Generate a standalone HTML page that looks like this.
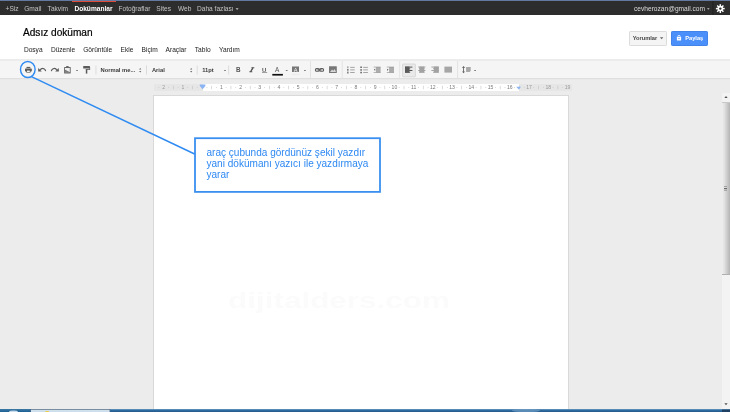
<!DOCTYPE html>
<html><head><meta charset="utf-8">
<style>
html,body{margin:0;padding:0;}
html{width:730px;height:412px;overflow:hidden;}
body{width:730px;height:412px;overflow:hidden;position:relative;background:#ececec;font-family:"Liberation Sans",sans-serif;}
.abs{position:absolute;}
#topline{left:-10px;top:-10px;width:750px;height:11px;background:#65789f;}
#gbar{left:-10px;top:1px;width:750px;height:14.3px;background:#2d2d2d;}
#gbar span{position:absolute;top:3.5px;font-size:6.6px;line-height:8px;color:#c4c4c4;white-space:nowrap;}
#red{left:72px;top:1px;width:44px;height:1px;background:#dd4b39;}
#hdr{left:-10px;top:15.3px;width:750px;height:44.7px;background:#fff;}
#title{left:23px;top:26px;font-size:10.1px;line-height:13px;color:#000;-webkit-text-stroke:0.2px #000;white-space:nowrap;}
.menu{top:45.5px;font-size:6.6px;line-height:8px;color:#222;white-space:nowrap;}
#tb{left:-10px;top:60px;width:750px;height:18.4px;background:#f5f5f5;box-shadow:0 0.6px 1.2px rgba(0,0,0,0.07);box-sizing:border-box;}
.tbt{top:66.8px;font-size:5.8px;line-height:7px;color:#3a3a3a;font-weight:bold;white-space:nowrap;}
#page{left:153.2px;top:95.3px;width:415.6px;height:330px;background:#fff;border:1px solid #d9d9d9;box-sizing:border-box;}
#ruler{left:153.8px;top:83.8px;width:418px;height:7.3px;background:#e6e6e6;}
#rulerw{left:202.5px;top:83.8px;width:316.5px;height:7.3px;background:#fff;}
#callout{left:195px;top:138.2px;width:185px;height:53.7px;background:#fff;}
#ctext{left:206px;top:147px;font-size:10.05px;line-height:11.1px;color:#2d88f2;white-space:nowrap;transform:translate(0.5px,0.35px);}
#wm{left:228px;top:288px;font-size:22px;line-height:26px;font-weight:bold;color:#fbfbfb;white-space:nowrap;transform-origin:0 0;transform:scaleX(1.43);}
#btn1{left:629px;top:31px;width:38px;height:14.6px;background:#f4f4f4;border:1px solid #dcdcdc;border-radius:1.2px;box-sizing:border-box;}
#btn2{left:671px;top:31px;width:37px;height:14.6px;background:#4b8ffb;border:1px solid #4283ea;border-radius:1.2px;box-sizing:border-box;}
.bt{top:34.6px;font-size:5.7px;line-height:7px;font-weight:bold;white-space:nowrap;}
#sbtrack{left:722px;top:92.5px;width:18px;height:316.5px;background:#f3f3f3;}
#sbthumb{left:722.3px;top:102px;width:17.7px;height:172.5px;background:linear-gradient(90deg,#efefef 0px,#dedede 2.7px,#b6b6b6 7.7px);border-top:1px solid #c8c8c8;border-bottom:1px solid #b0b0b0;box-sizing:border-box;}
#taskbar{left:-10px;top:409px;width:750px;height:13px;background:linear-gradient(180deg,#6f9cc0 0px,#2c6aa0 1.4px,#23598d 3px);}
#tk1{left:-10px;top:409px;width:41px;height:13px;background:linear-gradient(180deg,#3b7aa6 0px,#1d5f92 3px);}
#tk2{left:31px;top:409px;width:79px;height:13px;background:linear-gradient(180deg,#9ab3c6 0px,#d4e3ee 1.2px,#c9dcea 3px);}
#clip{position:absolute;left:0;top:0;width:730px;height:412px;overflow:hidden;}
#w{position:absolute;left:-10px;top:-10px;width:750px;height:432px;filter:blur(0.35px);background:#ececec;}
#c{position:absolute;left:10px;top:10px;width:730px;height:412px;}
</style></head><body><div id="clip"><div id="w"><div id="c">
<div class="abs" id="topline"></div>
<div class="abs" id="gbar"><div class="abs" style="left:10px;top:0">
<span style="left:5.6px">+Siz</span><span style="left:24.2px">Gmail</span><span style="left:47.6px">Takvim</span><span style="left:74.4px;color:#fff;font-weight:bold">Dokümanlar</span><span style="left:118.5px">Fotoğraflar</span><span style="left:156.3px">Sites</span><span style="left:178px">Web</span><span style="left:197px">Daha fazlası</span>
<span style="left:634px;color:#dcdcdc;font-size:6.62px">cevherozan@gmail.com</span>
</div></div>
<div class="abs" id="red"></div>
<div class="abs" id="hdr"></div>
<div class="abs" id="title">Adsız doküman</div>
<div class="abs menu" style="left:23.9px">Dosya</div>
<div class="abs menu" style="left:50.9px">Düzenle</div>
<div class="abs menu" style="left:83.2px">Görüntüle</div>
<div class="abs menu" style="left:120.6px">Ekle</div>
<div class="abs menu" style="left:141.6px">Biçim</div>
<div class="abs menu" style="left:165.6px">Araçlar</div>
<div class="abs menu" style="left:194.8px">Tablo</div>
<div class="abs menu" style="left:219.1px">Yardım</div>
<div class="abs" id="btn1"></div><div class="abs" id="btn2"></div>
<div class="abs bt" style="left:632.7px;color:#444">Yorumlar</div>
<div class="abs bt" style="left:685.2px;color:#fff">Paylaş</div>
<div class="abs" id="tb"></div>
<div class="abs tbt" style="left:100.5px">Normal me...</div>
<div class="abs tbt" style="left:151.9px">Arial</div>
<div class="abs tbt" style="left:202.2px">11pt</div>
<div class="abs" id="ruler"></div>
<div class="abs" id="rulerw"></div>
<div class="abs" id="page"></div>
<div class="abs" id="wm">dijitalders.com</div>
<div class="abs" id="callout"></div>
<div class="abs" id="ctext">araç çubunda gördünüz şekil yazdır<br>yani dökümanı yazıcı ile yazdırmaya<br>yarar</div>
<div class="abs" id="sbtrack"></div><div class="abs" id="sbthumb"></div>
<div class="abs" id="taskbar"></div><div class="abs" id="tk1"></div><div class="abs" id="tk2"></div>
<svg class="abs" style="left:0;top:0" width="730" height="412" viewBox="0 0 730 412">
<!-- gbar extras -->
<path d="M235.6 8.2 h3 l-1.5 1.7z" fill="#c4c4c4"/>
<path d="M707 8.2 h2.6 l-1.3 1.6z" fill="#c4c4c4"/>
<rect x="712" y="1" width="1.6" height="14" fill="#252525"/>
<!-- gear -->
<g transform="translate(720.3 8.6)" fill="#fff">
<circle r="2.75"/>
<g id="teeth"><rect x="-0.75" y="-4.4" width="1.5" height="8.8"/><rect x="-0.75" y="-4.4" width="1.5" height="8.8" transform="rotate(45)"/><rect x="-0.75" y="-4.4" width="1.5" height="8.8" transform="rotate(90)"/><rect x="-0.75" y="-4.4" width="1.5" height="8.8" transform="rotate(135)"/></g>
<circle r="1.2" fill="#2d2d2d"/>
</g>
<!-- button icons -->
<path d="M659.9 37.3 h3.4 l-1.7 2z" fill="#666"/>
<g fill="#fff"><rect x="676.9" y="37.1" width="4.2" height="3.5" rx="0.4"/><path d="M677.85 37.4 V36.6 A1.15 1.2 0 0 1 680.15 36.6 V37.4" fill="none" stroke="#fff" stroke-width="0.8"/><rect x="678" y="38.5" width="2" height="0.55" fill="#4b8ffb"/></g>
<!-- ruler -->
<rect x="158.43" y="87.1" width="0.8" height="0.8" fill="#c8c8c8"/><rect x="168.05" y="87.1" width="0.8" height="0.8" fill="#c8c8c8"/><rect x="172.95" y="85.8" width="0.6" height="3.4" fill="#c2c2c2"/><rect x="177.66" y="87.1" width="0.8" height="0.8" fill="#c8c8c8"/><rect x="187.28" y="87.1" width="0.8" height="0.8" fill="#c8c8c8"/><rect x="192.18" y="85.8" width="0.6" height="3.4" fill="#c2c2c2"/><rect x="196.89" y="87.1" width="0.8" height="0.8" fill="#c8c8c8"/><rect x="206.51" y="87.1" width="0.8" height="0.8" fill="#c8c8c8"/><rect x="211.41" y="85.8" width="0.6" height="3.4" fill="#c2c2c2"/><rect x="216.12" y="87.1" width="0.8" height="0.8" fill="#c8c8c8"/><rect x="225.74" y="87.1" width="0.8" height="0.8" fill="#c8c8c8"/><rect x="230.64" y="85.8" width="0.6" height="3.4" fill="#c2c2c2"/><rect x="235.35" y="87.1" width="0.8" height="0.8" fill="#c8c8c8"/><rect x="244.97" y="87.1" width="0.8" height="0.8" fill="#c8c8c8"/><rect x="249.88" y="85.8" width="0.6" height="3.4" fill="#c2c2c2"/><rect x="254.58" y="87.1" width="0.8" height="0.8" fill="#c8c8c8"/><rect x="264.20" y="87.1" width="0.8" height="0.8" fill="#c8c8c8"/><rect x="269.10" y="85.8" width="0.6" height="3.4" fill="#c2c2c2"/><rect x="273.81" y="87.1" width="0.8" height="0.8" fill="#c8c8c8"/><rect x="283.43" y="87.1" width="0.8" height="0.8" fill="#c8c8c8"/><rect x="288.33" y="85.8" width="0.6" height="3.4" fill="#c2c2c2"/><rect x="293.04" y="87.1" width="0.8" height="0.8" fill="#c8c8c8"/><rect x="302.66" y="87.1" width="0.8" height="0.8" fill="#c8c8c8"/><rect x="307.56" y="85.8" width="0.6" height="3.4" fill="#c2c2c2"/><rect x="312.27" y="87.1" width="0.8" height="0.8" fill="#c8c8c8"/><rect x="321.89" y="87.1" width="0.8" height="0.8" fill="#c8c8c8"/><rect x="326.80" y="85.8" width="0.6" height="3.4" fill="#c2c2c2"/><rect x="331.50" y="87.1" width="0.8" height="0.8" fill="#c8c8c8"/><rect x="341.12" y="87.1" width="0.8" height="0.8" fill="#c8c8c8"/><rect x="346.02" y="85.8" width="0.6" height="3.4" fill="#c2c2c2"/><rect x="350.73" y="87.1" width="0.8" height="0.8" fill="#c8c8c8"/><rect x="360.35" y="87.1" width="0.8" height="0.8" fill="#c8c8c8"/><rect x="365.25" y="85.8" width="0.6" height="3.4" fill="#c2c2c2"/><rect x="369.96" y="87.1" width="0.8" height="0.8" fill="#c8c8c8"/><rect x="379.58" y="87.1" width="0.8" height="0.8" fill="#c8c8c8"/><rect x="384.48" y="85.8" width="0.6" height="3.4" fill="#c2c2c2"/><rect x="389.19" y="87.1" width="0.8" height="0.8" fill="#c8c8c8"/><rect x="398.81" y="87.1" width="0.8" height="0.8" fill="#c8c8c8"/><rect x="403.71" y="85.8" width="0.6" height="3.4" fill="#c2c2c2"/><rect x="408.42" y="87.1" width="0.8" height="0.8" fill="#c8c8c8"/><rect x="418.04" y="87.1" width="0.8" height="0.8" fill="#c8c8c8"/><rect x="422.94" y="85.8" width="0.6" height="3.4" fill="#c2c2c2"/><rect x="427.65" y="87.1" width="0.8" height="0.8" fill="#c8c8c8"/><rect x="437.27" y="87.1" width="0.8" height="0.8" fill="#c8c8c8"/><rect x="442.18" y="85.8" width="0.6" height="3.4" fill="#c2c2c2"/><rect x="446.88" y="87.1" width="0.8" height="0.8" fill="#c8c8c8"/><rect x="456.50" y="87.1" width="0.8" height="0.8" fill="#c8c8c8"/><rect x="461.41" y="85.8" width="0.6" height="3.4" fill="#c2c2c2"/><rect x="466.11" y="87.1" width="0.8" height="0.8" fill="#c8c8c8"/><rect x="475.73" y="87.1" width="0.8" height="0.8" fill="#c8c8c8"/><rect x="480.63" y="85.8" width="0.6" height="3.4" fill="#c2c2c2"/><rect x="485.34" y="87.1" width="0.8" height="0.8" fill="#c8c8c8"/><rect x="494.96" y="87.1" width="0.8" height="0.8" fill="#c8c8c8"/><rect x="499.86" y="85.8" width="0.6" height="3.4" fill="#c2c2c2"/><rect x="504.57" y="87.1" width="0.8" height="0.8" fill="#c8c8c8"/><rect x="514.19" y="87.1" width="0.8" height="0.8" fill="#c8c8c8"/><rect x="519.10" y="85.8" width="0.6" height="3.4" fill="#c2c2c2"/><rect x="523.80" y="87.1" width="0.8" height="0.8" fill="#c8c8c8"/><rect x="533.42" y="87.1" width="0.8" height="0.8" fill="#c8c8c8"/><rect x="538.33" y="85.8" width="0.6" height="3.4" fill="#c2c2c2"/><rect x="543.03" y="87.1" width="0.8" height="0.8" fill="#c8c8c8"/><rect x="552.65" y="87.1" width="0.8" height="0.8" fill="#c8c8c8"/><rect x="557.56" y="85.8" width="0.6" height="3.4" fill="#c2c2c2"/><rect x="562.26" y="87.1" width="0.8" height="0.8" fill="#c8c8c8"/><text x="163.64" y="89" font-size="5.1" text-anchor="middle" fill="#9a9a9a" font-family="Liberation Sans">2</text><text x="182.87" y="89" font-size="5.1" text-anchor="middle" fill="#9a9a9a" font-family="Liberation Sans">1</text><text x="221.33" y="89" font-size="5.1" text-anchor="middle" fill="#7a7a7a" font-family="Liberation Sans">1</text><text x="240.56" y="89" font-size="5.1" text-anchor="middle" fill="#7a7a7a" font-family="Liberation Sans">2</text><text x="259.79" y="89" font-size="5.1" text-anchor="middle" fill="#7a7a7a" font-family="Liberation Sans">3</text><text x="279.02" y="89" font-size="5.1" text-anchor="middle" fill="#7a7a7a" font-family="Liberation Sans">4</text><text x="298.25" y="89" font-size="5.1" text-anchor="middle" fill="#7a7a7a" font-family="Liberation Sans">5</text><text x="317.48" y="89" font-size="5.1" text-anchor="middle" fill="#7a7a7a" font-family="Liberation Sans">6</text><text x="336.71" y="89" font-size="5.1" text-anchor="middle" fill="#7a7a7a" font-family="Liberation Sans">7</text><text x="355.94" y="89" font-size="5.1" text-anchor="middle" fill="#7a7a7a" font-family="Liberation Sans">8</text><text x="375.17" y="89" font-size="5.1" text-anchor="middle" fill="#7a7a7a" font-family="Liberation Sans">9</text><text x="394.40" y="89" font-size="5.1" text-anchor="middle" fill="#7a7a7a" font-family="Liberation Sans">10</text><text x="413.63" y="89" font-size="5.1" text-anchor="middle" fill="#7a7a7a" font-family="Liberation Sans">11</text><text x="432.86" y="89" font-size="5.1" text-anchor="middle" fill="#7a7a7a" font-family="Liberation Sans">12</text><text x="452.09" y="89" font-size="5.1" text-anchor="middle" fill="#7a7a7a" font-family="Liberation Sans">13</text><text x="471.32" y="89" font-size="5.1" text-anchor="middle" fill="#7a7a7a" font-family="Liberation Sans">14</text><text x="490.55" y="89" font-size="5.1" text-anchor="middle" fill="#7a7a7a" font-family="Liberation Sans">15</text><text x="509.78" y="89" font-size="5.1" text-anchor="middle" fill="#7a7a7a" font-family="Liberation Sans">16</text><text x="529.01" y="89" font-size="5.1" text-anchor="middle" fill="#9a9a9a" font-family="Liberation Sans">17</text><text x="548.24" y="89" font-size="5.1" text-anchor="middle" fill="#9a9a9a" font-family="Liberation Sans">18</text><text x="567.47" y="89" font-size="5.1" text-anchor="middle" fill="#9a9a9a" font-family="Liberation Sans">19</text>
<path d="M199.8 84.5 h5.6 v1.4 l-2.8 3.4 l-2.8 -3.4z" fill="#8ab4f4"/>
<path d="M516.3 86.7 h4.8 l-2.4 2.9z" fill="#8ab4f4"/>
<!-- toolbar separators -->
<rect x="-10" y="59.35" width="750" height="1.1" fill="#e2e2e2"/>
<g fill="#d9d9d9">
<rect x="95.5" y="65.5" width="0.9" height="9"/><rect x="146" y="65.5" width="0.9" height="9"/><rect x="196.7" y="65.5" width="0.9" height="9"/><rect x="228.2" y="65.5" width="0.9" height="9"/>
</g>
<g fill="#e3e3e3">
<rect x="310" y="61" width="1" height="17"/><rect x="341.7" y="61" width="1" height="17"/><rect x="399.2" y="61" width="1" height="17"/><rect x="457.1" y="61" width="1" height="17"/>
</g>
<!-- printer -->
<g fill="#5a5a5a">
<rect x="26.5" y="66.9" width="3.8" height="1.2"/>
<rect x="25" y="68.4" width="6.8" height="3" rx="0.6"/>
<rect x="26.3" y="70.2" width="4.2" height="2.4"/>
</g>
<rect x="27" y="70.6" width="2.8" height="1.4" fill="#f5f5f5"/>
<!-- undo -->
<path d="M40 70.4 C41.2 67.7 44.9 67.5 45.7 71.2" fill="none" stroke="#5a5a5a" stroke-width="1.05"/>
<path d="M38.2 67.9 v3.6 h3.6z" fill="#5a5a5a"/>
<!-- redo -->
<path d="M57 70.4 C55.8 67.7 52.1 67.5 51.3 71.2" fill="none" stroke="#5a5a5a" stroke-width="1.05"/>
<path d="M58.8 67.9 v3.6 h-3.6z" fill="#5a5a5a"/>
<!-- clipboard -->
<g>
<rect x="64.1" y="66.9" width="6.6" height="6.7" fill="#666" rx="0.5"/>
<rect x="66.2" y="66" width="2.4" height="1.5" fill="#666"/>
<path d="M65 67.9 h4.8 v4.4 l-4.8 -2.6z" fill="#ededed"/><path d="M65 70 l4.8 2.6 v0.3 h-4.8z" fill="#808080"/>
</g>
<rect x="76.1" y="70" width="1.8" height="0.8" fill="#666"/>
<!-- paint roller -->
<g fill="#5a5a5a">
<rect x="83.2" y="66.1" width="6.8" height="2.4" rx="0.3"/>
<rect x="85.8" y="69.1" width="4.3" height="0.8"/><rect x="89.4" y="67" width="0.7" height="2.6"/>
<rect x="85.8" y="69.3" width="1.5" height="4.3"/>
</g>
<!-- updown arrows -->
<g fill="#666">
<path d="M139.1 69.6 h2.2 l-1.1 -1.5z M139.1 71 h2.2 l-1.1 1.5z"/>
<path d="M190.1 69.6 h2.2 l-1.1 -1.5z M190.1 71 h2.2 l-1.1 1.5z"/>
<rect x="224.1" y="70" width="1.8" height="0.8"/>
<rect x="285.8" y="70" width="1.8" height="0.8"/>
<rect x="304" y="70" width="1.8" height="0.8"/>
<rect x="474.2" y="70" width="1.8" height="0.8"/>
</g>
<!-- B I U A -->
<g font-family="Liberation Sans" font-weight="bold" font-size="6.3" fill="#555">
<text x="236.1" y="72.1">B</text>

<text x="262.1" y="71.9" font-size="6">U</text>
<text x="275" y="72" font-size="6.4" font-weight="normal">A</text>
</g>
<rect x="262" y="72.4" width="5.2" height="0.6" fill="#666"/>
<path d="M251.3 67.75 h3 M249.3 71.75 h3 M253 67.6 L250.6 71.9" stroke="#555" stroke-width="0.9" fill="none"/><path d="M253 67.6 L250.6 71.9" stroke="#555" stroke-width="1.2" fill="none"/>
<rect x="272.3" y="73.9" width="10.6" height="1.7" fill="#111"/>
<!-- highlight A -->
<rect x="292" y="66.5" width="7" height="5.5" fill="#777"/>
<text x="295.5" y="71.6" font-size="5.6" text-anchor="middle" fill="#f5f5f5" font-family="Liberation Sans">A</text>
<rect x="291.6" y="73.8" width="7.8" height="1.4" fill="#ececec"/>
<!-- link -->
<g fill="none" stroke="#5a5a5a" stroke-width="1.1">
<rect x="315.4" y="68.6" width="3.9" height="2.6" rx="1.3"/>
<rect x="319.7" y="68.6" width="3.9" height="2.6" rx="1.3"/>
</g>
<rect x="317.5" y="69.4" width="4" height="1" fill="#5a5a5a"/>
<!-- image -->
<rect x="329" y="66.2" width="7.8" height="6.9" fill="#777" rx="0.4"/>
<path d="M330 72 l2 -2.4 l1.3 1.2 l1.4 -1.8 l1.3 3z" fill="#d8d8d8"/>
<!-- numbered list -->
<g fill="#909090">
<rect x="350.2" y="66.9" width="4.5" height="0.8"/><rect x="350.2" y="69.5" width="4.5" height="0.8"/><rect x="350.2" y="72.1" width="4.5" height="0.8"/>
<rect x="363.2" y="66.9" width="4.7" height="0.8"/><rect x="363.2" y="69.5" width="4.7" height="0.8"/><rect x="363.2" y="72.1" width="4.7" height="0.8"/>
</g>
<g fill="#666">
<rect x="347.5" y="66.3" width="0.8" height="1.8"/><rect x="347.2" y="68.9" width="1.3" height="1.8"/><rect x="347.2" y="71.6" width="1.3" height="1.9"/>
<rect x="360.3" y="66.5" width="1.6" height="1.5"/><rect x="360.3" y="69.2" width="1.6" height="1.5"/><rect x="360.3" y="71.8" width="1.6" height="1.5"/>
</g>
<!-- outdent / indent -->
<g>
<rect x="375.9" y="67" width="4.7" height="5.6" fill="#ababab"/>
<rect x="373.6" y="66.7" width="7" height="0.7" fill="#9a9a9a"/><rect x="373.6" y="72.2" width="7" height="0.7" fill="#9a9a9a"/>
<path d="M373.9 69.8 l1.3 -1 v2z" fill="#444"/>
<rect x="389.1" y="67" width="4.9" height="5.6" fill="#ababab"/>
<rect x="386.8" y="66.7" width="7.2" height="0.7" fill="#9a9a9a"/><rect x="386.8" y="72.2" width="7.2" height="0.7" fill="#9a9a9a"/>
<path d="M388.5 69.8 l-1.3 -1 v2z" fill="#444"/>
</g>
<!-- align buttons -->
<rect x="402.6" y="64" width="12.8" height="12.8" fill="#eaeaea" stroke="#cfcfcf" stroke-width="0.7" rx="0.6"/>
<g fill="#555">
<rect x="405" y="66.6" width="7.4" height="1"/><rect x="405" y="68.3" width="5.2" height="1"/><rect x="405" y="70" width="7.4" height="1"/><rect x="405" y="71.7" width="5.2" height="1"/>
<rect x="405" y="66.6" width="4.4" height="6.1" fill="#5a5a5a"/>
</g>
<g fill="#9a9a9a">
<rect x="418.2" y="66.6" width="7.2" height="0.9"/><rect x="419" y="68.3" width="5.6" height="0.9"/><rect x="418.2" y="70" width="7.2" height="0.9"/><rect x="419" y="71.7" width="5.6" height="0.9"/>
<rect x="419.4" y="66.6" width="4.8" height="6" fill="#a2a2a2"/>
<rect x="431.4" y="66.6" width="7.4" height="0.9"/><rect x="433" y="68.3" width="5.8" height="0.9"/><rect x="431.4" y="70" width="7.4" height="0.9"/><rect x="433" y="71.7" width="5.8" height="0.9"/>
<rect x="434" y="66.6" width="4.8" height="6" fill="#a2a2a2"/>
<rect x="444.4" y="66.6" width="7.6" height="6" fill="#a6a6a6"/>
</g>
<!-- line spacing -->
<g fill="#666">
<rect x="463.1" y="66.8" width="0.9" height="6"/>
<path d="M462 68 h3.1 l-1.55 -1.9z M462 71.4 h3.1 l-1.55 1.9z"/>
<path d="M466.1 66.9 h4.6 v4 l-1.2 1.2 h-3.4z" fill="#a8a8a8"/>
</g>
<!-- scrollbar arrows -->
<path d="M724.4 98 h3.2 l-1.6 -2z" fill="#505050"/>
<path d="M724.4 403.2 h3.2 l-1.6 2z" fill="#505050"/>
<g fill="#8a8a8a"><rect x="724" y="186" width="3" height="0.7"/><rect x="724" y="188" width="3" height="1.2" fill="#6a6a6a"/><rect x="724" y="190.2" width="3" height="0.6"/></g>
<!-- taskbar bits -->
<rect x="30.4" y="409" width="79.6" height="0.7" fill="#5f7488"/>
<rect x="30.2" y="409" width="0.6" height="3" fill="#4a6a88"/><rect x="109.6" y="409" width="0.6" height="3" fill="#4a6a88"/>
<ellipse cx="47.2" cy="412" rx="2.1" ry="1.1" fill="#f2c73a"/>
<ellipse cx="13.5" cy="412.2" rx="4.5" ry="1.6" fill="#c9dcec"/>
<ellipse cx="526" cy="410.5" rx="14" ry="1.6" fill="#6f9cc4" opacity="0.7"/>
<rect x="722" y="409.6" width="8" height="2.4" fill="#1f3f63"/>
<!-- annotation -->
<rect x="195" y="138.2" width="185" height="53.7" fill="none" stroke="#3a8ff0" stroke-width="1.8"/>
<ellipse cx="27.8" cy="69.5" rx="7.3" ry="8" fill="none" stroke="#2f8bf2" stroke-width="1.45"/>
<line x1="31.4" y1="76.6" x2="194.6" y2="154" stroke="#2f8bf2" stroke-width="1.5"/>
</svg>
</div></div></div>
</body></html>
